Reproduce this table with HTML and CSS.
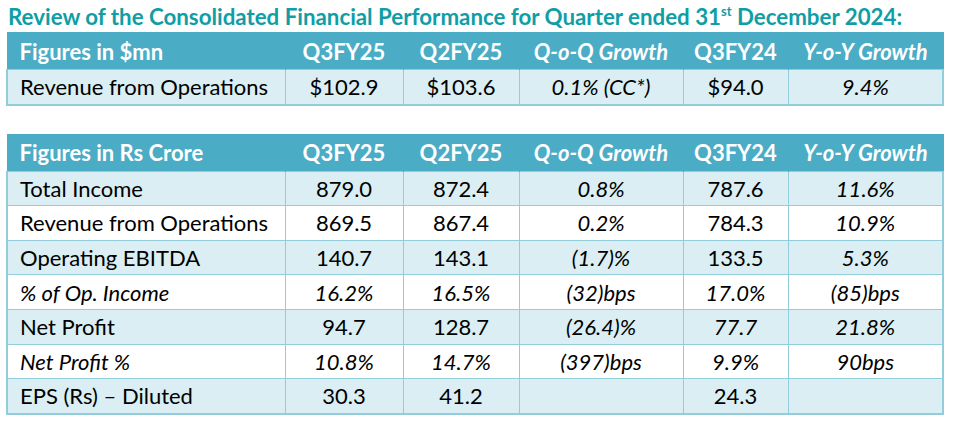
FILE: index.html
```html
<!DOCTYPE html>
<html lang="en">
<head>
<meta charset="utf-8">
<title>Consolidated Financial Performance</title>
<link rel="stylesheet" href="styles.css">
</head>
<body>
<main class="page">
  <h1 class="title">Review of the Consolidated Financial Performance for Quarter ended 31<sup>st</sup> December 2024:</h1>

  <table class="fin fin-usd">
    <colgroup>
      <col class="c1"><col class="c2"><col class="c3"><col class="c4"><col class="c5"><col class="c6">
    </colgroup>
    <thead>
      <tr>
        <th class="label">Figures in $mn</th>
        <th>Q3FY25</th>
        <th>Q2FY25</th>
        <th class="it">Q-o-Q Growth</th>
        <th>Q3FY24</th>
        <th class="it">Y-o-Y Growth</th>
      </tr>
    </thead>
    <tbody>
      <tr class="shade">
        <td class="label">Revenue from Operations</td>
        <td>$102.9</td>
        <td>$103.6</td>
        <td class="it">0.1% (CC*)</td>
        <td>$94.0</td>
        <td class="it">9.4%</td>
      </tr>
    </tbody>
  </table>

  <table class="fin fin-inr">
    <colgroup>
      <col class="c1"><col class="c2"><col class="c3"><col class="c4"><col class="c5"><col class="c6">
    </colgroup>
    <thead>
      <tr>
        <th class="label">Figures in Rs Crore</th>
        <th>Q3FY25</th>
        <th>Q2FY25</th>
        <th class="it">Q-o-Q Growth</th>
        <th>Q3FY24</th>
        <th class="it">Y-o-Y Growth</th>
      </tr>
    </thead>
    <tbody>
      <tr class="shade">
        <td class="label">Total Income</td>
        <td>879.0</td><td>872.4</td><td class="it">0.8%</td><td>787.6</td><td class="it">11.6%</td>
      </tr>
      <tr>
        <td class="label">Revenue from Operations</td>
        <td>869.5</td><td>867.4</td><td class="it">0.2%</td><td>784.3</td><td class="it">10.9%</td>
      </tr>
      <tr class="shade">
        <td class="label">Operating EBITDA</td>
        <td>140.7</td><td>143.1</td><td class="it">(1.7)%</td><td>133.5</td><td class="it">5.3%</td>
      </tr>
      <tr class="it">
        <td class="label">% of Op. Income</td>
        <td>16.2%</td><td>16.5%</td><td>(32)bps</td><td>17.0%</td><td>(85)bps</td>
      </tr>
      <tr class="shade">
        <td class="label">Net Profit</td>
        <td>94.7</td><td>128.7</td><td class="it">(26.4)%</td><td class="it">77.7</td><td class="it">21.8%</td>
      </tr>
      <tr class="it">
        <td class="label">Net Profit %</td>
        <td>10.8%</td><td>14.7%</td><td>(397)bps</td><td>9.9%</td><td>90bps</td>
      </tr>
      <tr class="shade">
        <td class="label">EPS (Rs) – Diluted</td>
        <td>30.3</td><td>41.2</td><td></td><td>24.3</td><td></td>
      </tr>
    </tbody>
  </table>
</main>
</body>
</html>
```

FILE: styles.css
```css
html, body {
  margin: 0;
  padding: 0;
  background: #ffffff;
}

.page {
  padding: 1px 13px 0 6px;
  font-family: Lato, "Open Sans", sans-serif;
  color: #000000;
}

.title {
  margin: 0 0 0 2px;
  font-size: 22.3px;
  line-height: 31px;
  font-weight: 700;
  color: #0f9ea6;
  white-space: nowrap;
}

.title sup {
  font-size: 13px;
  line-height: 0;
  vertical-align: 9px;
}

.fin {
  width: 936px;
  border-collapse: collapse;
  table-layout: fixed;
  font-size: 22px;
}

.fin-usd {
  margin-bottom: 28px;
}

.c1 { width: 278px; }
.c2 { width: 118px; }
.c3 { width: 116px; }
.c4 { width: 164px; }
.c5 { width: 105px; }
.c6 { width: 155px; }

.fin th {
  background: #4bacc6;
  color: #ffffff;
  font-weight: 700;
  height: 36px;
  padding: 0;
  text-align: center;
  border: 1px solid #4bacc6;
  border-bottom: none;
}

.fin td {
  height: 33.6px;
  padding: 0;
  text-align: center;
  border: 1px solid #92cddc;
}

.fin .label {
  text-align: left;
  padding-left: 12px;
}

.fin .it {
  font-style: italic;
}

.fin tbody tr {
  background: #ffffff;
}

.fin tbody tr.shade {
  background: #daeef3;
}

.fin tbody tr:last-child td {
  border-bottom: 2px solid #92cddc;
}

.fin tbody td:first-child {
  border-left: 2px solid #92cddc;
}

.fin tbody td:last-child {
  border-right: 2px solid #92cddc;
}
```
